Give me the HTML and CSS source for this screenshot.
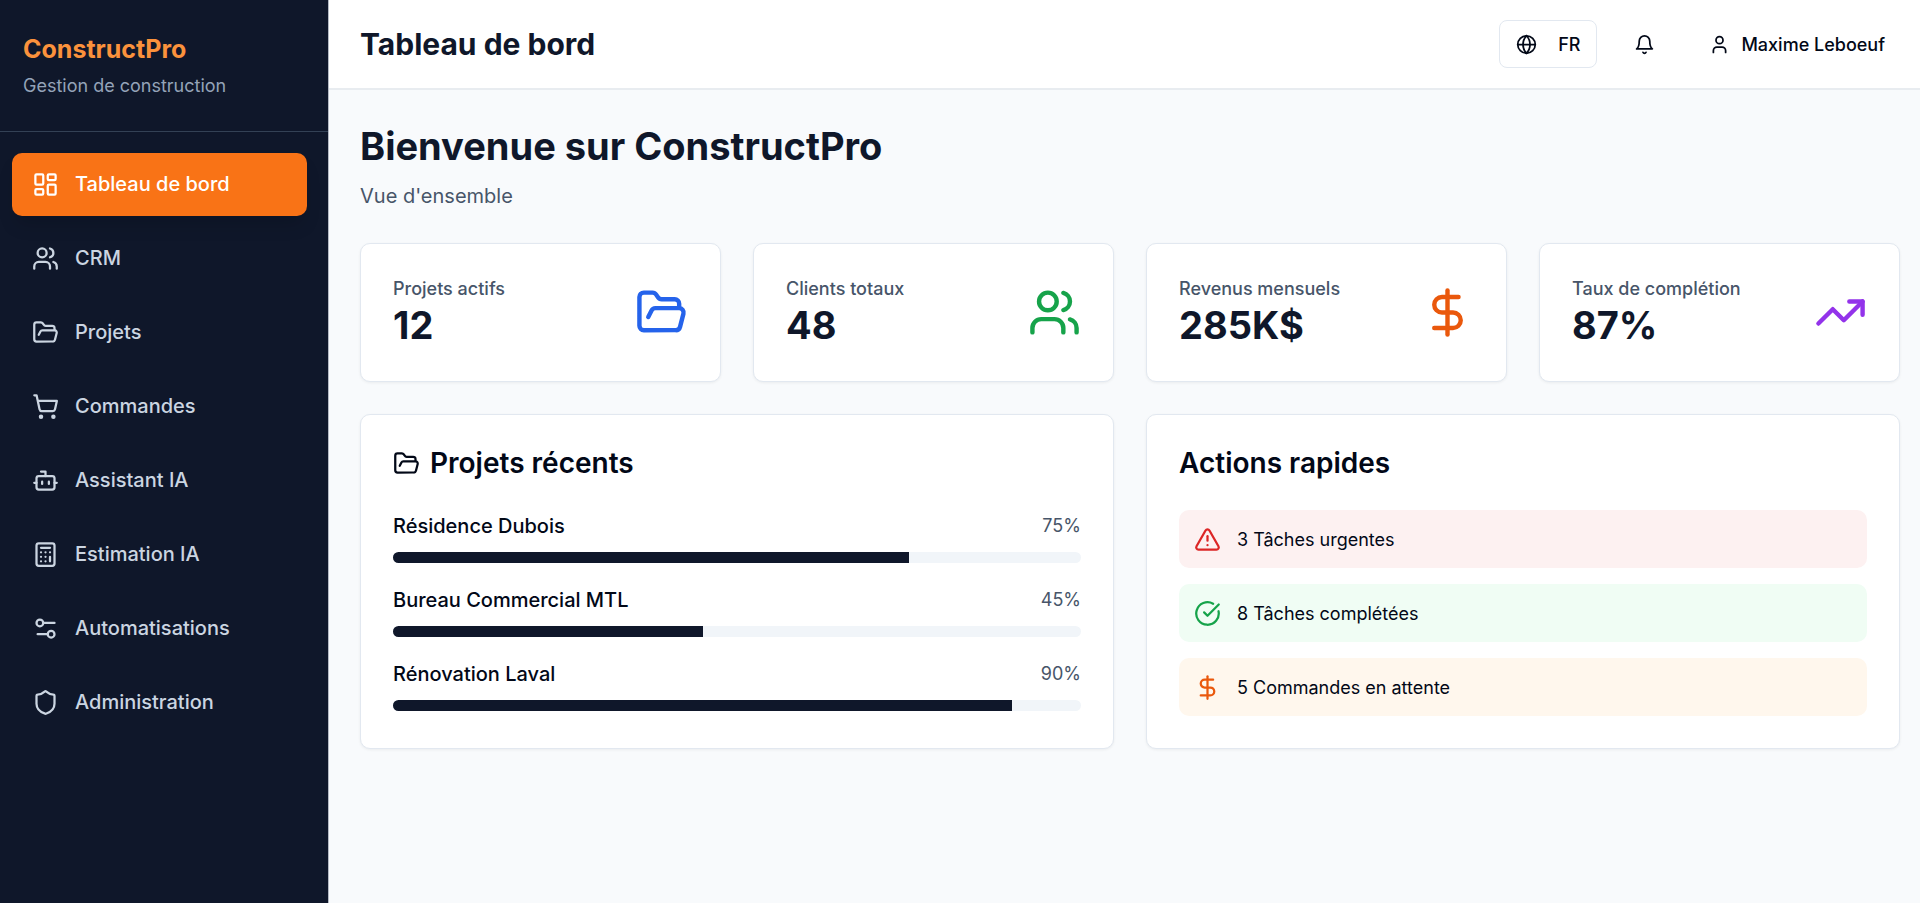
FILE: index.html
```
<!DOCTYPE html>
<html lang="fr">
<head>
    <meta charset="UTF-8" />
    <meta name="viewport" content="width=device-width, initial-scale=1" />
    <title>ConstructPro | Tableau de bord</title>
    <link rel="stylesheet" href="styles.css">
</head>
<body>

<!-- Shared icons -->
<svg class="sprite" aria-hidden="true">
    <symbol id="i-dashboard" viewBox="0 0 24 24"><rect width="7" height="9" x="3" y="3" rx="1"/><rect width="7" height="5" x="14" y="3" rx="1"/><rect width="7" height="9" x="14" y="12" rx="1"/><rect width="7" height="5" x="3" y="16" rx="1"/></symbol>
    <symbol id="i-users" viewBox="0 0 24 24"><path d="M16 21v-2a4 4 0 0 0-4-4H6a4 4 0 0 0-4 4v2"/><circle cx="9" cy="7" r="4"/><path d="M22 21v-2a4 4 0 0 0-3-3.87"/><path d="M16 3.13a4 4 0 0 1 0 7.75"/></symbol>
    <symbol id="i-folder" viewBox="0 0 24 24"><path d="m6 14 1.5-2.9A2 2 0 0 1 9.24 10H20a2 2 0 0 1 1.94 2.5l-1.54 6a2 2 0 0 1-1.95 1.5H4a2 2 0 0 1-2-2V5a2 2 0 0 1 2-2h3.9a2 2 0 0 1 1.69.9l.81 1.2a2 2 0 0 0 1.67.9H18a2 2 0 0 1 2 2v2"/></symbol>
    <symbol id="i-cart" viewBox="0 0 24 24"><circle cx="8" cy="21" r="1"/><circle cx="19" cy="21" r="1"/><path d="M2.05 2.05h2l2.66 12.42a2 2 0 0 0 2 1.58h9.78a2 2 0 0 0 1.95-1.57l1.65-7.43H5.12"/></symbol>
    <symbol id="i-bot" viewBox="0 0 24 24"><path d="M12 8V4H8"/><rect width="16" height="12" x="4" y="8" rx="2"/><path d="M2 14h2"/><path d="M20 14h2"/><path d="M15 13v2"/><path d="M9 13v2"/></symbol>
    <symbol id="i-calculator" viewBox="0 0 24 24"><rect width="16" height="20" x="4" y="2" rx="2"/><path d="M8 6h8"/><path d="M16 14v4"/><path d="M16 10h.01"/><path d="M12 10h.01"/><path d="M8 10h.01"/><path d="M12 14h.01"/><path d="M8 14h.01"/><path d="M12 18h.01"/><path d="M8 18h.01"/></symbol>
    <symbol id="i-settings" viewBox="0 0 24 24"><path d="M20 7h-9"/><path d="M14 17H5"/><circle cx="17" cy="17" r="3"/><circle cx="7" cy="7" r="3"/></symbol>
    <symbol id="i-shield" viewBox="0 0 24 24"><path d="M20 13c0 5-3.5 7.5-7.66 8.95a1 1 0 0 1-.67-.01C7.5 20.5 4 18 4 13V6a1 1 0 0 1 1-1c2 0 4.5-1.2 6.24-2.72a1.17 1.17 0 0 1 1.52 0C14.51 3.81 17 5 19 5a1 1 0 0 1 1 1z"/></symbol>
    <symbol id="i-globe" viewBox="0 0 24 24"><circle cx="12" cy="12" r="10"/><path d="M12 2a14.5 14.5 0 0 0 0 20 14.5 14.5 0 0 0 0-20"/><path d="M2 12h20"/></symbol>
    <symbol id="i-bell" viewBox="0 0 24 24"><path d="M6 8a6 6 0 0 1 12 0c0 7 3 9 3 9H3s3-2 3-9"/><path d="M10.3 21a1.94 1.94 0 0 0 3.4 0"/></symbol>
    <symbol id="i-user" viewBox="0 0 24 24"><path d="M19 21v-2a4 4 0 0 0-4-4H9a4 4 0 0 0-4 4v2"/><circle cx="12" cy="7" r="4"/></symbol>
    <symbol id="i-dollar" viewBox="0 0 24 24"><path d="M12 2v20"/><path d="M17 5H9.5a3.5 3.5 0 0 0 0 7h5a3.5 3.5 0 0 1 0 7H6"/></symbol>
    <symbol id="i-trend" viewBox="0 0 24 24"><path d="m22 7-8.5 8.5-5-5L2 17"/><path d="M16 7h6v6"/></symbol>
    <symbol id="i-alert" viewBox="0 0 24 24"><path d="m21.73 18-8-14a2 2 0 0 0-3.48 0l-8 14A2 2 0 0 0 4 21h16a2 2 0 0 0 1.73-3"/><path d="M12 9v4"/><path d="M12 17h.01"/></symbol>
    <symbol id="i-check" viewBox="0 0 24 24"><path d="M21.8 10A10 10 0 1 1 17 3.34"/><path d="m9 11 3 3L22 4"/></symbol>
</svg>

<div class="layout">
    <aside class="sidebar">
        <div class="brand">
            <div class="brand-name">ConstructPro</div>
            <p class="brand-tagline">Gestion de construction</p>
        </div>
        <nav class="nav">
            <a class="nav-link active" href="#dashboard"><svg class="icon"><use href="#i-dashboard"/></svg>Tableau de bord</a>
            <a class="nav-link" href="#crm"><svg class="icon"><use href="#i-users"/></svg>CRM</a>
            <a class="nav-link" href="#projets"><svg class="icon"><use href="#i-folder"/></svg>Projets</a>
            <a class="nav-link" href="#commandes"><svg class="icon"><use href="#i-cart"/></svg>Commandes</a>
            <a class="nav-link" href="#assistant"><svg class="icon"><use href="#i-bot"/></svg>Assistant IA</a>
            <a class="nav-link" href="#estimation"><svg class="icon"><use href="#i-calculator"/></svg>Estimation IA</a>
            <a class="nav-link" href="#automatisations"><svg class="icon"><use href="#i-settings"/></svg>Automatisations</a>
            <a class="nav-link" href="#administration"><svg class="icon"><use href="#i-shield"/></svg>Administration</a>
        </nav>
    </aside>

    <div class="page">
        <header class="topbar">
            <h2 class="topbar-title">Tableau de bord</h2>
            <div class="topbar-actions">
                <button class="btn btn-outline" type="button"><svg class="icon icon-sm"><use href="#i-globe"/></svg>FR</button>
                <button class="btn" type="button" aria-label="Notifications"><svg class="icon icon-sm"><use href="#i-bell"/></svg></button>
                <button class="btn btn-user" type="button"><svg class="icon icon-sm"><use href="#i-user"/></svg>Maxime Leboeuf</button>
            </div>
        </header>

        <main class="content">
            <div class="welcome">
                <h1>Bienvenue sur ConstructPro</h1>
                <p>Vue d'ensemble</p>
            </div>

            <div class="stats">
                <div class="card stat">
                    <div>
                        <p class="stat-label">Projets actifs</p>
                        <p class="stat-value">12</p>
                    </div>
                    <svg class="icon icon-lg blue"><use href="#i-folder"/></svg>
                </div>
                <div class="card stat">
                    <div>
                        <p class="stat-label">Clients totaux</p>
                        <p class="stat-value">48</p>
                    </div>
                    <svg class="icon icon-lg green"><use href="#i-users"/></svg>
                </div>
                <div class="card stat">
                    <div>
                        <p class="stat-label">Revenus mensuels</p>
                        <p class="stat-value">285K$</p>
                    </div>
                    <svg class="icon icon-lg orange"><use href="#i-dollar"/></svg>
                </div>
                <div class="card stat">
                    <div>
                        <p class="stat-label">Taux de complétion</p>
                        <p class="stat-value">87%</p>
                    </div>
                    <svg class="icon icon-lg purple"><use href="#i-trend"/></svg>
                </div>
            </div>

            <div class="panels">
                <section class="card panel">
                    <h3 class="panel-title"><svg class="icon"><use href="#i-folder"/></svg>Projets récents</h3>
                    <div class="projects">
                        <div class="project">
                            <div class="project-head"><span>Résidence Dubois</span><span class="percent">75%</span></div>
                            <div class="bar"><div class="bar-fill" style="width: 75%"></div></div>
                        </div>
                        <div class="project">
                            <div class="project-head"><span>Bureau Commercial MTL</span><span class="percent">45%</span></div>
                            <div class="bar"><div class="bar-fill" style="width: 45%"></div></div>
                        </div>
                        <div class="project">
                            <div class="project-head"><span>Rénovation Laval</span><span class="percent">90%</span></div>
                            <div class="bar"><div class="bar-fill" style="width: 90%"></div></div>
                        </div>
                    </div>
                </section>

                <section class="card panel">
                    <h3 class="panel-title">Actions rapides</h3>
                    <div class="tasks">
                        <div class="task task-red"><svg class="icon red"><use href="#i-alert"/></svg>3 Tâches urgentes</div>
                        <div class="task task-green"><svg class="icon green"><use href="#i-check"/></svg>8 Tâches complétées</div>
                        <div class="task task-orange"><svg class="icon orange"><use href="#i-dollar"/></svg>5 Commandes en attente</div>
                    </div>
                </section>
            </div>
        </main>
    </div>
</div>

</body>
</html>
```
FILE: styles.css
```
* { box-sizing: border-box; }
body { margin: 0; font-family: Inter, "Liberation Sans", sans-serif; font-size: 20px; line-height: 29px; color: #020817; background: #f8fafc; }
h1, h2, h3, p { margin: 0; }

.sprite { display: none; }
.icon { width: 27px; height: 27px; flex-shrink: 0; fill: none; stroke: currentColor; stroke-width: 2; stroke-linecap: round; stroke-linejoin: round; }
.icon-sm { width: 21px; height: 21px; }
.icon-lg { width: 53px; height: 53px; }
.blue { color: #2563eb; }
.green { color: #16a34a; }
.orange { color: #ea580c; }
.purple { color: #9333ea; }
.red { color: #dc2626; }

.layout { display: flex; min-height: 100vh; }

/* Sidebar */
.sidebar { width: 329px; flex-shrink: 0; background: #0f172a; border-right: 1px solid #b4bac4; }
.brand { height: 132px; padding: 32px 23px; border-bottom: 1px solid #334155; }
.brand-name { font-size: 25px; line-height: 34px; font-weight: 700; color: #fb923c; }
.brand-tagline { margin-top: 5px; font-size: 18px; color: #94a3b8; }
.nav { display: flex; flex-direction: column; gap: 11px; padding: 21px 21px 21px 12px; }
.nav-link { display: flex; align-items: center; gap: 16px; height: 63px; padding: 0 20px; border-radius: 10px; font-weight: 500; color: #cbd5e1; text-decoration: none; }
.nav-link:hover { color: #fff; }
.nav-link.active { background: #f97316; color: #fff; box-shadow: 0 12px 18px -4px rgba(0, 0, 0, 0.15); }

/* Top bar */
.page { flex: 1; min-width: 0; }
.topbar { display: flex; align-items: center; justify-content: space-between; height: 90px; padding: 0 18px 0 31px; background: #fff; border-bottom: 2px solid #e8ecf0; }
.topbar-title { font-size: 30px; line-height: 36px; font-weight: 700; color: #0f172a; }
.topbar-actions { display: flex; align-items: center; gap: 20px; }
.btn { display: flex; align-items: center; height: 48px; padding: 0 16px; border: 1px solid transparent; border-radius: 8px; background: #fff; color: #020817; font-family: inherit; font-size: 18px; font-weight: 500; cursor: pointer; }
.btn:hover { background: #f1f5f9; }
.btn-outline { gap: 21px; border-color: #e2e8f0; }
.btn-user { gap: 11px; }

/* Dashboard */
.content { display: flex; flex-direction: column; gap: 32px; padding: 32px 20px 32px 31px; }
.welcome h1 { font-size: 38px; line-height: 48px; font-weight: 700; color: #0f172a; }
.welcome p { margin-top: 12px; color: #475569; }
.card { background: #fff; border: 1px solid #e2e8f0; border-radius: 10px; box-shadow: 0 1px 3px rgba(0, 0, 0, 0.06); }
.stats { display: grid; grid-template-columns: repeat(4, 1fr); gap: 32px; }
.stat { display: flex; align-items: center; justify-content: space-between; padding: 32px; }
.stat-label { font-size: 18px; line-height: 26px; font-weight: 500; color: #475569; }
.stat-value { font-size: 38px; line-height: 47px; font-weight: 700; color: #0f172a; }

.panels { display: grid; grid-template-columns: repeat(2, 1fr); gap: 32px; }
.panel { padding: 32px; }
.panel-title { display: flex; align-items: center; gap: 10px; font-size: 28px; line-height: 32px; font-weight: 600; }
.projects { display: flex; flex-direction: column; gap: 21px; margin-top: 31px; }
.project-head { display: flex; align-items: center; justify-content: space-between; line-height: 32px; font-weight: 500; }
.percent { font-size: 18px; font-weight: 400; color: #475569; }
.bar { height: 11px; margin-top: 10px; border-radius: 6px; background: #f1f5f9; overflow: hidden; }
.bar-fill { height: 100%; background: #0f172a; }

.tasks { display: flex; flex-direction: column; gap: 16px; margin-top: 31px; }
.task { display: flex; align-items: center; gap: 16px; height: 58px; padding: 0 15px; border-radius: 10px; font-size: 18px; }
.task-red { background: #fdf1f1; }
.task-green { background: #f0fdf4; }
.task-orange { background: #fff7ed; }
```
